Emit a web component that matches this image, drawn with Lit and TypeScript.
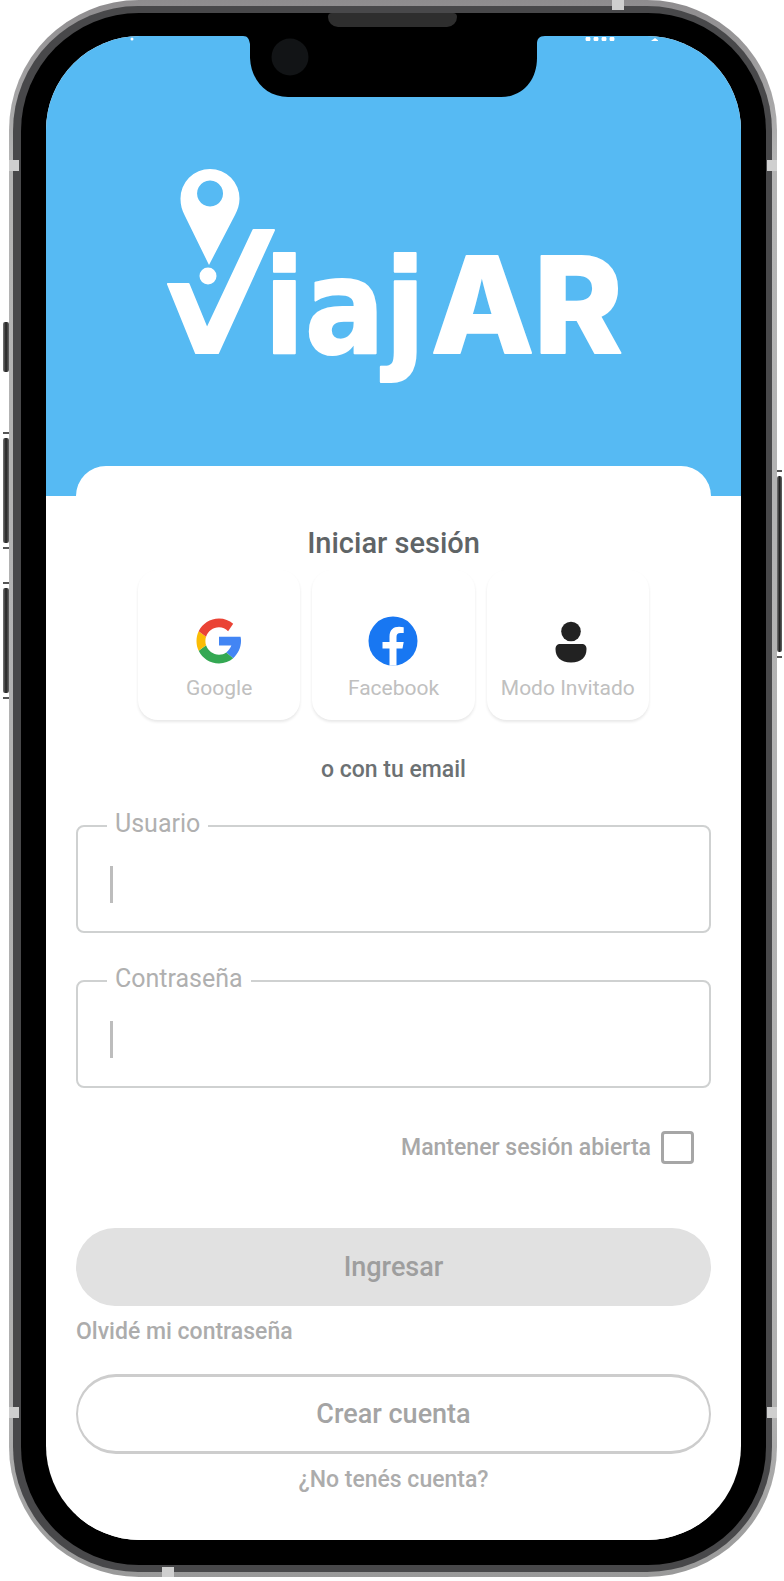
import { LitElement, html, css, svg } from "lit";
import { customElement, property } from "lit/decorators.js";

const googleIcon = svg`
  <svg width="46" height="46" viewBox="0 0 48 48" aria-hidden="true">
    <path fill="#4285f4" d="M46.500 19.600H24v9.200h12.900c-1.200 3.100-2.900 5.300-5.400 7.100l7.300 6.100c5-4.500 8.200-11 8.200-18.200 0-1.500-.2-2.900-.5-4.200z"/>
    <path fill="#34a853" d="M2.800 34.200l7.700-5.700C12.400 34.200 17.700 38.300 24 38.300c3 0 5.500-.8 7.500-2.300l7.300 6.100C34.900 45.500 29.700 47.500 24 47.500 14.600 47.500 6.600 42.100 2.800 34.200z"/>
    <path fill="#fbbc05" d="M2.800 34.200C1.300 31.200.5 27.700.5 24s.8-7.100 2.300-10.200l7.700 5.800c-.5 1.400-.7 2.900-.7 4.400s.2 3.100.7 4.500z"/>
    <path fill="#ea4335" d="M2.800 13.800C6.600 6 14.700.5 24 .5c5.700 0 10.800 2 14.800 5.600l-5.300 7.600C30.900 11.200 27.700 9.700 24 9.700c-6.300 0-11.600 4.200-13.500 9.900z"/>
  </svg>`;

const facebookIcon = svg`
  <svg width="50" height="50" viewBox="0 0 50 50" aria-hidden="true">
    <circle cx="25" cy="25" r="24.5" fill="#1877f2"/>
    <path fill="#fff" d="M21.500 49.500V32.500h-7V26h7v-5.500c0-6.500 3.800-9.700 9.600-9.700 1.700 0 3.300.2 4.600.5v5.700h-3.200c-3 0-4 1.500-4 4V26h7.200l-1.200 6.500h-6v17z"/>
  </svg>`;

const guestIcon = svg`
  <svg width="40" height="46" viewBox="-6 0 40 46" aria-hidden="true">
    <circle cx="17" cy="13.5" r="9.8" fill="#222"/>
    <path fill="#222" d="M6.500 26h21c3.500 0 5 2 5 5 0 8-5 13.500-15.500 13.500S1.500 39 1.500 31c0-3 1.500-5 5-5z"/>
  </svg>`;

const logo = svg`
  <svg class="logo" viewBox="0 0 460 230" role="img" aria-label="ViajAR">
    <path fill="#fff" fill-rule="evenodd" d="M46 1a29.500 29.500 0 0 1 29.500 30c0 6-2 11-4.500 16L45 97 20.500 47C18 42 16.500 37 16.500 31A29.500 29.500 0 0 1 46 1zm0 11.500a13 13 0 1 0 .1 0z"/>
    <circle cx="44" cy="108" r="8.5" fill="#fff"/>
    <path fill="#fff" stroke="#fff" stroke-width="2" stroke-linejoin="round" d="M4 116h20.500L43 161 89.500 62H110L54 185H32z"/>
    <text class="word" x="100" y="185">iaj<tspan class="caps" x="267">AR</tspan></text>
  </svg>`;

@customElement("social-button")
export class SocialButton extends LitElement {
  @property() label = "";

  static styles = css`
    :host {
      flex: 1;
      display: flex;
    }
    .card {
      flex: 1;
      display: flex;
      flex-direction: column;
      align-items: center;
      justify-content: flex-end;
      gap: 8px;
      height: 150px;
      padding: 0 0 18px;
      border: 0;
      border-radius: 20px;
      background: #fff;
      box-shadow: 0 2px 3px #e8e8e8;
      color: #c0c0c0;
      font: 400 21px/28px Roboto, sans-serif;
      white-space: nowrap;
    }
    .icon {
      display: flex;
      align-items: center;
      height: 50px;
    }
  `;

  render() {
    return html`
      <button class="card" type="button">
        <span class="icon"><slot></slot></span>
        <span>${this.label}</span>
      </button>
    `;
  }
}

@customElement("outlined-field")
export class OutlinedField extends LitElement {
  @property() label = "";
  @property() type = "text";

  static styles = css`
    :host {
      display: block;
    }
    .field {
      margin: 0;
      padding: 0 0 0 29px;
      border: 2px solid #cfd1d1;
      border-radius: 8px;
      min-width: 0;
    }
    .legend {
      padding: 0 8px 4px;
      color: #b0b0b0;
      font: 400 25px/28px Roboto, sans-serif;
    }
    .input {
      display: block;
      box-sizing: border-box;
      width: 100%;
      height: 89px;
      padding: 0 12px;
      border: 0;
      outline: 0;
      background: linear-gradient(#bdbdbd, #bdbdbd) 3px 24px / 3px 37px no-repeat;
      color: #555;
      font: 400 25px/28px Roboto, sans-serif;
    }
  `;

  render() {
    return html`
      <fieldset class="field">
        <legend class="legend"><label for="input">${this.label}</label></legend>
        <input class="input" id="input" type=${this.type} />
      </fieldset>
    `;
  }
}

@customElement("app-root")
export class AppRoot extends LitElement {
  static styles = css`
    :host {
      display: block;
      background: #fff;
      font-family: Roboto, sans-serif;
    }
    .device {
      position: relative;
      margin: 0 7px 4px 9px;
      padding: 6px 5px 5px 4px;
      border-radius: 130px;
      background: linear-gradient(#8e8c8e, #b4b4b4 10%, #b0b0b0 90%, #999);
    }
    .rim {
      padding: 7px 6px 7px 8px;
      border-radius: 125px;
      background: #48484a;
    }
    .bezel {
      padding: 23px 25px 25px;
      border-radius: 118px;
      background: #000;
    }
    .screen {
      position: relative;
      overflow: hidden;
      border-radius: 94px;
      background: #fff;
    }
    .speaker {
      position: absolute;
      top: 13px;
      left: 50%;
      width: 129px;
      height: 14px;
      margin-left: -65px;
      border-radius: 4px 4px 10px 10px;
      background: #2e2e2e;
    }
    .notch {
      position: absolute;
      top: 0;
      left: 50%;
      margin-left: -151px;
    }
    .status {
      position: absolute;
      top: 1px;
      right: 0;
      left: 0;
      display: flex;
      justify-content: space-between;
      padding: 0 83px;
    }
    .hero {
      display: flex;
      justify-content: center;
      height: 328px;
      padding: 132px 30px 0;
      background: #56baf3;
    }
    .logo {
      width: 460px;
      max-width: 100%;
      height: 230px;
      overflow: visible;
    }
    .word {
      fill: #fff;
      stroke: #fff;
      stroke-width: 2px;
      stroke-linejoin: round;
      font: 700 132px "DejaVu Sans Condensed", "Liberation Sans", sans-serif;
    }
    .caps {
      font: 800 134px Inter, sans-serif;
    }
    .sheet {
      position: relative;
      margin: -30px 30px 0;
      padding: 61px 0 46px;
      border-radius: 30px 30px 0 0;
      background: #fff;
    }
    .title {
      margin: 0 0 11px;
      color: #5f6466;
      font: 500 29px/32px Roboto, sans-serif;
      text-align: center;
    }
    .social {
      display: flex;
      gap: 12px;
      max-width: 511px;
      margin: 0 auto 36px;
    }
    .divider {
      margin: 0 0 26px;
      color: #6c7173;
      font: 500 23px/28px Roboto, sans-serif;
      text-align: center;
    }
    .fields {
      display: grid;
      gap: 32px;
    }
    .keep {
      display: flex;
      align-items: center;
      justify-content: flex-end;
      gap: 10px;
      margin: 43px 17px 64px 0;
      color: #a8a8a8;
      font: 500 23px/28px Roboto, sans-serif;
    }
    .check {
      appearance: none;
      width: 33px;
      height: 33px;
      margin: 0;
      border: 3px solid #a6a6a6;
      border-radius: 4px;
      background: #fff;
    }
    .button {
      display: block;
      width: 100%;
      height: 78px;
      padding: 0;
      border: 0;
      border-radius: 40px;
      background: #e1e1e1;
      color: #9e9e9e;
      font: 500 27px/32px Roboto, sans-serif;
    }
    .button.outlined {
      height: 80px;
      border: 2px solid #cdcdcd;
      border-width: 3px 2px;
      background: #fff;
      color: #a4a4a4;
    }
    .forgot {
      display: block;
      margin: 12px 0 28px;
      color: #acacac;
      font: 500 23px/28px Roboto, sans-serif;
      text-decoration: none;
    }
    .hint {
      margin: 12px 0 0;
      color: #acacac;
      font: 500 23px/28px Roboto, sans-serif;
      text-align: center;
    }
    .key {
      position: absolute;
      left: -6px;
      width: 6px;
      border-radius: 2px;
      background: linear-gradient(90deg, #777, #222 50%, #666);
    }
    .key.mute {
      top: 322px;
      height: 50px;
    }
    .key.up {
      top: 438px;
      height: 105px;
    }
    .key.down {
      top: 588px;
      height: 105px;
    }
    .key.long::before,
    .key.long::after {
      content: "";
      position: absolute;
      top: -6px;
      right: 0;
      left: 0;
      height: 2px;
      background: #555;
    }
    .key.long::after {
      top: auto;
      bottom: -6px;
    }
    .key.power {
      top: 476px;
      right: -5px;
      left: auto;
      width: 5px;
      height: 176px;
    }
    .band {
      position: absolute;
      background: #cfcfcf;
    }
    .band.side {
      width: 10px;
      height: 11px;
    }
    .band.edge {
      width: 12px;
      height: 10px;
    }
    .left {
      left: 0;
    }
    .right {
      right: 0;
    }
    .high {
      top: 160px;
    }
    .low {
      bottom: 159px;
    }
    .band.over {
      top: 0;
      right: 153px;
    }
    .band.under {
      bottom: 0;
      left: 153px;
    }
  `;

  render() {
    return html`
      <div class="device">
        <span class="key mute"></span>
        <span class="key long up"></span>
        <span class="key long down"></span>
        <span class="key long power"></span>
        <div class="rim">
          <div class="bezel">
            <main class="screen">
              <header class="hero">${logo}</header>
              <div class="status" aria-hidden="true">
                <svg width="6" height="4"><circle cx="3" cy="2" r="1.5" fill="#fff" /></svg>
                <svg width="74" height="4">
                  <g fill="#fff">
                    <circle cx="4" cy="2" r="2.5" /><circle cx="12" cy="2" r="2.5" />
                    <circle cx="20" cy="2" r="2.5" /><circle cx="28" cy="2" r="2.5" />
                    <path d="M67 4l4-3 4 3z" />
                  </g>
                </svg>
              </div>
              <svg class="notch" width="302" height="61" viewBox="0 0 302 61" aria-hidden="true">
                <path d="M0 0c5 0 6 3 7 8v14c1 22 16 39 38 39h213c22 0 36-17 36-39V8c0-5 2-8 8-8z" />
                <circle cx="47" cy="21" r="18.5" fill="#121416" />
              </svg>
              <form class="sheet">
                <h1 class="title">Iniciar sesión</h1>
                <div class="social">
                  <social-button label="Google">${googleIcon}</social-button>
                  <social-button label="Facebook">${facebookIcon}</social-button>
                  <social-button label="Modo Invitado">${guestIcon}</social-button>
                </div>
                <p class="divider">o con tu email</p>
                <div class="fields">
                  <outlined-field label="Usuario"></outlined-field>
                  <outlined-field label="Contraseña" type="password"></outlined-field>
                </div>
                <div class="keep">
                  <label for="keep">Mantener sesión abierta</label>
                  <input class="check" id="keep" type="checkbox" />
                </div>
                <button class="button" type="button">Ingresar</button>
                <a class="forgot" href="#">Olvidé mi contraseña</a>
                <button class="button outlined" type="button">Crear cuenta</button>
                <p class="hint">¿No tenés cuenta?</p>
              </form>
            </main>
          </div>
        </div>
        <span class="speaker"></span>
        <span class="band side left high"></span>
        <span class="band side right high"></span>
        <span class="band side left low"></span>
        <span class="band side right low"></span>
        <span class="band edge over"></span>
        <span class="band edge under"></span>
      </div>
    `;
  }
}
